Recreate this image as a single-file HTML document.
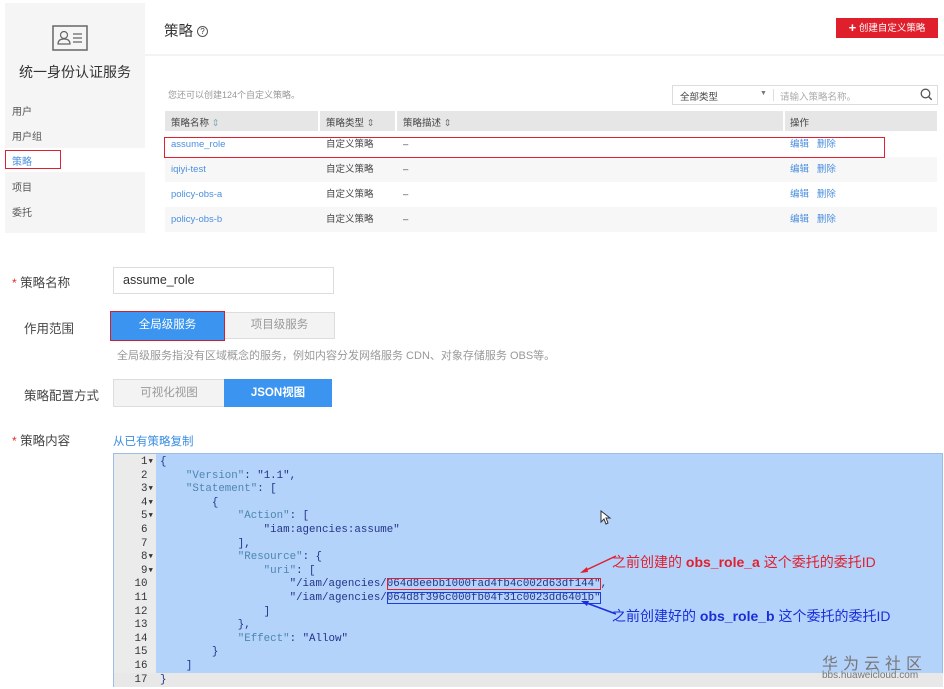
<!DOCTYPE html>
<html><head><meta charset="utf-8"><style>
*{margin:0;padding:0;box-sizing:border-box}
body{width:944px;height:689px;background:#fff;font-family:"Liberation Sans","Noto Sans CJK SC",sans-serif;position:relative;overflow:hidden;color:#333}
.a{position:absolute;white-space:nowrap}
.side{left:5px;top:3px;width:140px;height:230px;background:#f5f5f5}
.m{font-size:10px;color:#555;left:12px}
.th{font-size:9.5px;color:#444;top:115px}
.row{left:165px;width:772px;height:25px}
.cell{font-size:9.5px;top:0;height:25px;line-height:25px;position:absolute;color:#444}
.lk{color:#4b8fe0}
.lbl{font-size:12.5px;color:#444}
.star{color:#e03030;font-size:12px}
pre{font-family:"Liberation Mono",monospace;font-size:10.8px;line-height:13.6px;white-space:pre !important}
.k{color:#4d86b0}.s{color:#23348a}
</style></head><body>
<div class="a side"></div>
<svg class="a" style="left:52px;top:25px" width="36" height="26" viewBox="0 0 36 26"><rect x="1" y="1" width="34" height="24" fill="none" stroke="#666" stroke-width="1.5"/><circle cx="12" cy="10" r="3.5" fill="none" stroke="#666" stroke-width="1.2"/><path d="M6 19 Q6 14 12 14 Q18 14 18 19 Z" fill="none" stroke="#666" stroke-width="1.2"/><path d="M21 9h9M21 13h9M21 17h9" stroke="#666" stroke-width="1.2"/></svg>
<div class="a" style="left:19px;top:62px;font-size:14px;color:#333">统一身份认证服务</div>
<div class="a m" style="top:103px">用户</div>
<div class="a m" style="top:128px">用户组</div>
<div class="a" style="left:5px;top:148px;width:140px;height:24px;background:#fff"></div>
<div class="a" style="left:5px;top:150px;width:56px;height:19px;border:1.5px solid #e02030"></div>
<div class="a m" style="top:153px;color:#4b8fe0">策略</div>
<div class="a m" style="top:179px">项目</div>
<div class="a m" style="top:204px">委托</div>

<div class="a" style="left:164px;top:20px;font-size:14.5px;color:#333">策略 <span style="border:1px solid #555;border-radius:50%;display:inline-block;width:11px;height:11px;line-height:9px;text-align:center;font-size:8px;vertical-align:2px">?</span></div>
<div class="a" style="left:145px;top:54px;width:799px;height:2px;background:#f3f3f3"></div>
<div class="a" style="left:836px;top:18px;width:102px;height:20px;background:#e01f2d;color:#fff;font-size:9.5px;line-height:20px;text-align:center"><b style="font-size:13px;vertical-align:-1px">+</b> 创建自定义策略</div>
<div class="a" style="left:168px;top:88px;font-size:9px;color:#999">您还可以创建124个自定义策略。</div>
<div class="a" style="left:672px;top:85px;width:266px;height:20px;border:1px solid #ddd"></div>
<div class="a" style="left:680px;top:89px;font-size:9.5px;color:#444">全部类型</div>
<div class="a" style="left:760px;top:90px;font-size:7px;color:#777">▼</div>
<div class="a" style="left:773px;top:89px;width:1px;height:12px;background:#ddd"></div>
<div class="a" style="left:780px;top:89px;font-size:9.5px;color:#aaa">请输入策略名称。</div>
<svg class="a" style="left:920px;top:88px" width="13" height="13"><circle cx="5.5" cy="5.5" r="4.3" fill="none" stroke="#555" stroke-width="1.3"/><path d="M8.7 8.7l3 3" stroke="#555" stroke-width="1.4"/></svg>
<div class="a" style="left:165px;top:111px;width:772px;height:20px;background:#e6e6e6"></div>
<div class="a" style="left:318px;top:111px;width:2px;height:20px;background:#fff"></div>
<div class="a" style="left:395px;top:111px;width:2px;height:20px;background:#fff"></div>
<div class="a" style="left:783px;top:111px;width:2px;height:20px;background:#fff"></div>
<div class="a th" style="left:171px">策略名称 <span style="color:#8ab">⇕</span></div>
<div class="a th" style="left:326px">策略类型 <span style="color:#777">⇕</span></div>
<div class="a th" style="left:403px">策略描述 <span style="color:#777">⇕</span></div>
<div class="a th" style="left:790px">操作</div>
<div class="a row" style="top:132px"><span class="cell lk" style="left:6px">assume_role</span><span class="cell" style="left:161px">自定义策略</span><span class="cell" style="left:238px">–</span><span class="cell lk" style="left:625px">编辑&nbsp;&nbsp;&nbsp;删除</span></div>
<div class="a row" style="top:157px;background:#f7f7f7"><span class="cell lk" style="left:6px">iqiyi-test</span><span class="cell" style="left:161px">自定义策略</span><span class="cell" style="left:238px">–</span><span class="cell lk" style="left:625px">编辑&nbsp;&nbsp;&nbsp;删除</span></div>
<div class="a row" style="top:182px"><span class="cell lk" style="left:6px">policy-obs-a</span><span class="cell" style="left:161px">自定义策略</span><span class="cell" style="left:238px">–</span><span class="cell lk" style="left:625px">编辑&nbsp;&nbsp;&nbsp;删除</span></div>
<div class="a row" style="top:207px;background:#f7f7f7"><span class="cell lk" style="left:6px">policy-obs-b</span><span class="cell" style="left:161px">自定义策略</span><span class="cell" style="left:238px">–</span><span class="cell lk" style="left:625px">编辑&nbsp;&nbsp;&nbsp;删除</span></div>
<div class="a" style="left:164px;top:137px;width:721px;height:21px;border:1.5px solid #e02030"></div>

<div class="a lbl" style="left:12px;top:272px"><span class="star">*</span> 策略名称</div>
<div class="a" style="left:113px;top:267px;width:221px;height:27px;border:1px solid #ddd;font-size:12.5px;padding:5px 9px;color:#333">assume_role</div>
<div class="a lbl" style="left:24px;top:318px">作用范围</div>
<div class="a" style="left:224px;top:312px;width:111px;height:27px;background:#f3f3f3;border:1px solid #ddd;font-size:11.5px;color:#999;text-align:center;line-height:25px">项目级服务</div>
<div class="a" style="left:110px;top:311px;width:115px;height:30px;background:#3a94f0;border:1.5px solid #d0202e;font-size:11.5px;color:#fff;text-align:center;line-height:27px">全局级服务</div>
<div class="a" style="left:117px;top:347px;font-size:11px;color:#999">全局级服务指没有区域概念的服务，例如内容分发网络服务 CDN、对象存储服务 OBS等。</div>
<div class="a lbl" style="left:24px;top:385px">策略配置方式</div>
<div class="a" style="left:113px;top:379px;width:112px;height:28px;background:#f3f3f3;border:1px solid #ddd;font-size:11.5px;color:#999;text-align:center;line-height:26px">可视化视图</div>
<div class="a" style="left:224px;top:379px;width:108px;height:28px;background:#3a94f0;font-size:11.5px;color:#fff;text-align:center;line-height:28px;font-weight:bold">JSON视图</div>
<div class="a lbl" style="left:12px;top:430px"><span class="star">*</span> 策略内容</div>
<div class="a" style="left:113px;top:433px;font-size:11.5px;color:#3a8ee0">从已有策略复制</div>

<div class="a" style="left:113px;top:453px;width:830px;height:234px;background:#b4d3fb;border:1px solid #9bbde6"></div>
<div class="a" style="left:114px;top:454px;width:42px;height:232px;background:#ebebeb"></div>
<div class="a" style="left:114px;top:673px;width:829px;height:14px;background:#e8e8e8"></div>
<pre class="a" style="left:114px;top:456px;width:40px;text-align:right;color:#333">1▾
2 
3▾
4▾
5▾
6 
7 
8▾
9▾
10 
11 
12 
13 
14 
15 
16 
17 </pre>
<pre class="a" style="left:160px;top:456px;color:#23348a">{
    <span class="k">"Version"</span>: <span class="s">"1.1"</span>,
    <span class="k">"Statement"</span>: [
        {
            <span class="k">"Action"</span>: [
                <span class="s">"iam:agencies:assume"</span>
            ],
            <span class="k">"Resource"</span>: {
                <span class="k">"uri"</span>: [
                    <span class="s">"/iam/agencies/<span style="outline:1.5px solid #e02030;outline-offset:-1px">064d8eebb1000fad4fb4c002d63df144"</span></span>,
                    <span class="s">"/iam/agencies/<span style="outline:1.5px solid #1a3ee0;outline-offset:-1px">064d8f396c000fb04f31c0023dd6401b"</span></span>
                ]
            },
            <span class="k">"Effect"</span>: <span class="s">"Allow"</span>
        }
    ]
}</pre>
<svg class="a" style="left:570px;top:548px" width="50" height="80"><path d="M46 8 L12 24" stroke="#e02030" stroke-width="1.5"/><path d="M10 25 l7-6 l1 5z" fill="#e02030"/><path d="M46 66 L14 54" stroke="#1a2ee0" stroke-width="1.5"/><path d="M11 53 l8 0 l-2 5z" fill="#1a2ee0"/></svg>
<div class="a" style="left:612px;top:552px;font-size:14px;color:#e0202e">之前创建的 <b>obs_role_a</b> 这个委托的委托ID</div>
<div class="a" style="left:612px;top:606px;font-size:14px;color:#1a2ed8">之前创建好的 <b>obs_role_b</b> 这个委托的委托ID</div>
<div class="a" style="left:822px;top:650px;font-size:16px;color:#777;letter-spacing:5px">华为云社区</div>
<div class="a" style="left:822px;top:670px;font-size:10px;color:#777">bbs.huaweicloud.com</div>
<svg class="a" style="left:600px;top:510px" width="12" height="16"><path d="M1 1 L1 12 L4 9 L6 14 L8 13 L6 8 L10 8 Z" fill="#fff" stroke="#333" stroke-width="1"/></svg>
</body></html>
